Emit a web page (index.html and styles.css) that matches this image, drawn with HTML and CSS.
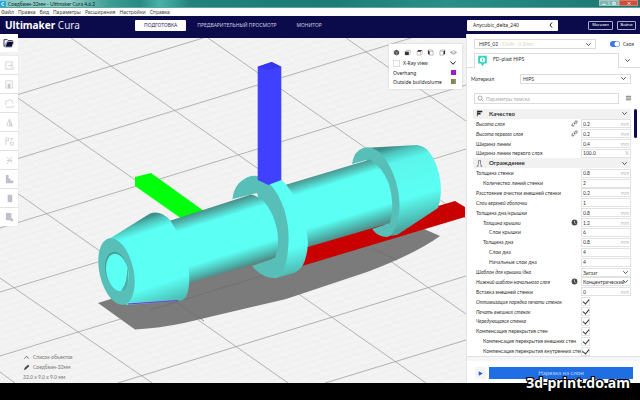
FILE: index.html
```html
<!DOCTYPE html>
<html lang="ru">
<head>
<meta charset="utf-8">
<title>Ultimaker Cura</title>
<link rel="stylesheet" href="styles.css">
</head>
<body>
<svg class="defs" aria-hidden="true">
  <symbol id="chev" viewBox="0 0 8 8"><path d="M1.500 2.500 4 5.300 6.500 2.500" fill="none" stroke="currentColor" stroke-width="1"/></symbol>
  <symbol id="link" viewBox="0 0 8 8"><path d="M3.4 4.6 5 3M3.6 2.8 5 1.4a1.2 1.2 0 0 1 1.700 1.700L5.300 4.500M4.400 5.200 3 6.600A1.200 1.200 0 0 1 1.300 4.900L2.700 3.500" fill="none" stroke="#555" stroke-width="1"/></symbol>
  <symbol id="fx" viewBox="0 0 8 8"><circle cx="4" cy="4" r="3.300" fill="#4a4a4a"/><path d="M4 1.800v2.500l1.400 1" fill="none" stroke="#ddd" stroke-width=".8"/></symbol>
</svg>

<div class="titlebar">
  <svg class="app-icon" viewBox="0 0 8 8"><rect width="8" height="8" rx="1" fill="#25a9dc"/><path d="M5.600 2.500a2 2 0 1 0 0 3" fill="none" stroke="#fff" stroke-width="1.200"/></svg>
  <span class="title-text">Соедбвин-32мм - Ultimaker Cura 4.6.2</span>
  <div class="win-buttons">
    <button aria-label="Свернуть"><svg viewBox="0 0 8 6"><path d="M2 4h4" stroke="#fff"/></svg></button>
    <button aria-label="Развернуть"><svg viewBox="0 0 8 6"><path d="M2.500 1.500h3v2.500h-3z" fill="none" stroke="#fff"/></svg></button>
    <button class="close" aria-label="Закрыть"><svg viewBox="0 0 8 6"><path d="M2.500 1.500l3 3M5.500 1.500l-3 3" stroke="#fff"/></svg></button>
  </div>
</div>

<nav class="menubar">
  <a href="#">Файл</a><a href="#">Правка</a><a href="#">Вид</a><a href="#">Параметры</a><a href="#">Расширения</a><a href="#">Настройки</a><a href="#">Справка</a>
</nav>

<header class="header">
  <div class="brand"><b>Ultimaker</b> Cura</div>
  <div class="stages">
    <button class="stage active">ПОДГОТОВКА</button>
    <button class="stage preview">ПРЕДВАРИТЕЛЬНЫЙ ПРОСМОТР</button>
    <button class="stage">МОНИТОР</button>
  </div>
  <div class="account">
    <button class="printer"><span>Anycubic_delta_240</span><svg viewBox="0 0 8 8"><path d="M5 1.500 3 4l2 2.500" fill="none" stroke="#222"/></svg></button>
    <button class="outline market">Магазин</button>
    <button class="outline">Войти</button>
  </div>
</header>

<main class="workspace">
  <section class="viewport">
    <svg class="scene" viewBox="0 38 466 345" preserveAspectRatio="xMidYMid slice" role="img" aria-label="3D-модель">
      <defs>
        <pattern id="fineA" width="40" height="6.200" patternUnits="userSpaceOnUse" patternTransform="rotate(-17)"><path d="M0 3h40" stroke="#ebebeb" stroke-width=".7"/></pattern>
        <pattern id="fineB" width="40" height="8" patternUnits="userSpaceOnUse" patternTransform="rotate(35)"><path d="M0 4h40" stroke="#efefef" stroke-width=".6"/></pattern>
        <linearGradient id="shaft1" gradientUnits="userSpaceOnUse" x1="206" y1="209" x2="226" y2="273">
          <stop offset="0" stop-color="#4a8f8a"/><stop offset=".08" stop-color="#4fb9b1"/><stop offset=".2" stop-color="#5bfff4"/><stop offset=".74" stop-color="#5bfff4"/><stop offset=".88" stop-color="#4fc4bb"/><stop offset="1" stop-color="#4d8885"/>
        </linearGradient>
        <linearGradient id="shaft2" gradientUnits="userSpaceOnUse" x1="328" y1="171" x2="348" y2="236">
          <stop offset="0" stop-color="#4a8f8a"/><stop offset=".08" stop-color="#4fb9b1"/><stop offset=".2" stop-color="#5bfff4"/><stop offset=".72" stop-color="#5bfff4"/><stop offset=".86" stop-color="#4fc4bb"/><stop offset="1" stop-color="#4d8885"/>
        </linearGradient>
        <linearGradient id="coneL" gradientUnits="userSpaceOnUse" x1="132" y1="222" x2="160" y2="306">
          <stop offset="0" stop-color="#3f8f8a"/><stop offset=".06" stop-color="#4cc4bc"/><stop offset=".16" stop-color="#5bfff4"/><stop offset=".76" stop-color="#5bfff4"/><stop offset="1" stop-color="#4cbcb4"/>
        </linearGradient>
        <linearGradient id="coneR" gradientUnits="userSpaceOnUse" x1="398" y1="145" x2="421" y2="224">
          <stop offset="0" stop-color="#3f8f8a"/><stop offset=".07" stop-color="#4bc4bc"/><stop offset=".2" stop-color="#5bf6eb"/><stop offset=".65" stop-color="#5bfff4"/><stop offset=".85" stop-color="#51cfc6"/><stop offset="1" stop-color="#49a8a2"/>
        </linearGradient>
        <linearGradient id="ring" gradientUnits="userSpaceOnUse" x1="270" y1="180" x2="297" y2="276">
          <stop offset="0" stop-color="#5bfff4"/><stop offset=".72" stop-color="#5bfff4"/><stop offset="1" stop-color="#4dafa8"/>
        </linearGradient>
      </defs>
      <rect x="0" y="38" width="466" height="345" fill="#f3f3f3"/>
      <rect x="0" y="38" width="466" height="345" fill="url(#fineA)"/>
      <rect x="0" y="38" width="466" height="345" fill="url(#fineB)"/>
      <g stroke="#a2a2a2" stroke-width=".8" fill="none">
        <path d="M0 100 203 38M0 164 411 38M0 228 466 85M0 292 466 149M0 356 466 213M118 383 466 276M325 383 466 340"/>
        <path d="M71 38 466 314M0 85.500 426 383M0 181 288 383M0 278 152 383M0 372 15 383M208 38 466 218M346 38 466 121"/>
      </g>
      <path d="M98 303 135 329.500Q160 328 184 323L286 299 367 272Q415 254 440 236L424 229 300 240Z" fill="#7b7b7b"/>
      <g stroke="#6b6b6b" stroke-width=".7"><path d="M176 302 204 321M150 310 330 255M373 249 397 260"/></g>
      <path d="M135 177 151 173 204 211 182 219 135 186Z" fill="#00ff0a"/>
      <path d="M455 201 465 207V217L302 266 306 245Z" fill="#c90000"/>
      <!-- right barb -->
      <path d="M363 148 417 145Q425 146 430 153 438 164 440.500 182 442 196 438 208L397 235 388 236Z" fill="url(#coneR)"/>
      <path d="M352 164Q354 151 363 148 376 145 386 160 395 174 398 190 401 205 398 219 394 236 387 237 378 237 372 229L390 223 370 159Z" fill="#57bfb7"/>
      <path d="M285 185 370 159.500Q383 168 389 184 395 206 390 223L308 247Z" fill="url(#shaft2)"/>
      <!-- centre ring -->
      <path d="M256 176 281 179Q292 190 300 207 307 225 308 244 307 257 303 265 299 271 294 273L276 278Z" fill="url(#ring)"/>
      <path d="M232.500 199Q234 183 248 177 257 173 267 181 279 192 285 212 291 233 287 258 284 276 276 278 263 279 252 266L275 258 257 193Z" fill="#57bfb7"/>
      <path d="M166 222 251 194.500Q265 197 273 216 282 240 275 258L189 283Z" fill="url(#shaft1)"/>
      <path d="M257.700 66.700 271.700 62 281.300 66.700V180L268.300 185 257.700 180Z" fill="#4040ff"/>
      <path d="M257.700 66.700 271.700 62 281.300 66.700 268 70Z" fill="#3636ef"/>
      <!-- left barb -->
      <path d="M109 239 150 213.500Q160 210 170 220 181 236 187 259 192 284 186 297 183 301 178 301L126 305Z" fill="url(#coneL)"/>
      <path d="M128 304 178 300.500" stroke="#7a35d8" stroke-width="1.200"/>
      <ellipse cx="116.500" cy="271.500" rx="17" ry="34" transform="rotate(-13 116.500 271.500)" fill="#57bfb7"/>
      <ellipse cx="117" cy="271.500" rx="11.500" ry="20" transform="rotate(-12 117 271.500)" fill="#489f99"/>
      <ellipse cx="117.500" cy="272.500" rx="11" ry="19" transform="rotate(-12 117.500 272.500)" fill="#5bfff4"/>
      <path d="M127 267Q131 282 125 290L121 291Q128 282 127 267Z" fill="#4dafa8"/>
    </svg>

    <div class="tools">
      <button class="open" aria-label="Открыть"><svg viewBox="0 0 14 12"><path d="M1 10V2h4l1 1h5v2H4.500L2 10z" fill="#fff" stroke="#0b0b40"/><path d="M2 11 5 4h8l-2.500 7z" fill="#0b0b40"/></svg></button>
      <div class="toolbar">
        <button aria-label="Переместить"><svg viewBox="0 0 12 12"><path d="M2 2h7v3M2 2v8h8V7M4 6h5M7 4l2 2-2 2"/></svg></button>
        <button aria-label="Масштаб"><svg viewBox="0 0 12 12"><path d="M2 2h7v8H2z"/><path class="f" d="M4 5h3v5H4z"/></svg></button>
        <button aria-label="Поворот"><svg viewBox="0 0 12 12"><path d="M2 8V3h2l2-1 3 1 1 3M2 10h8V8"/></svg></button>
        <button aria-label="Зеркало"><svg viewBox="0 0 12 12"><path d="M3 9 6 2v8z"/><path class="f" d="M7 2l2 7 1 1H7z"/></svg></button>
        <button aria-label="Настройки модели"><svg viewBox="0 0 12 12"><path d="M2 10V2h3v3H2M7 3h3M8.500 2v3M7 7h3v3H7z"/></svg></button>
        <button aria-label="Блокировка поддержек"><svg viewBox="0 0 12 12"><path d="M3 2l6 7M9 2 3 10M3 6h6"/></svg></button>
        <button class="dim" aria-label="Поддержки"><svg viewBox="0 0 12 12"><path class="f" d="M2 1h3v4h2v2h3v3H2z"/></svg></button>
        <button class="dim" aria-label="Цилиндр"><svg viewBox="0 0 12 12"><path class="f" d="M4 2h5v8H4z"/></svg></button>
        <button class="dim" aria-label="Сетка"><svg viewBox="0 0 12 12"><path class="f" d="M2 1h6v6h2v3H7V9H2z"/></svg></button>
      </div>
    </div>

    <div class="view-panel">
      <div class="cams">
        <svg viewBox="0 0 8 8"><path d="M4 .8 7 2.400v3.400L4 7.300 1 5.800V2.400z" fill="#555"/><path d="M1.500 2.700 4 4l2.500-1.300M4 4v3" stroke="#aaa" stroke-width=".6" fill="none"/></svg>
        <svg viewBox="0 0 8 8"><path d="M1 3h4.500v4H1z" fill="#333"/><path d="M1 3l1.500-1.500H7v4L5.500 7" fill="none" stroke="#999" stroke-width=".7"/></svg>
        <svg viewBox="0 0 8 8"><path d="M1 3l1.500-2H7L5.500 3z" fill="#333"/><path d="M1.300 3v4h4V3M7 1v4L5.500 7" fill="none" stroke="#aaa" stroke-width=".7"/></svg>
        <svg viewBox="0 0 8 8"><path d="M1 1l2 1.500V7L1 5.500z" fill="#333"/><path d="M1 1h4l2 1.500M3 2.500h4V7H3" fill="none" stroke="#999" stroke-width=".7"/></svg>
        <svg viewBox="0 0 8 8"><path d="M5 2.500 7 1v4.500L5 7z" fill="#333"/><path d="M1 2.500h4V7H1zM1 2.500 3 1h4" fill="none" stroke="#999" stroke-width=".7"/></svg>
        <svg viewBox="0 0 8 8"><path d="M.8 3.500 4 2l3.200 1.500L4 5zM.8 3.500v.8L4 6l3.200-1.700v-.8" fill="none" stroke="#888" stroke-width=".7"/></svg>
      </div>
      <button class="view-mode"><i></i><span>X-Ray view</span><svg><use href="#chev"/></svg></button>
      <div class="legend"><span>Overhang</span><i class="over"></i></div>
      <div class="legend"><span>Outside buildvolume</span><i class="outside"></i></div>
    </div>

    <div class="object-info">
      <button><svg viewBox="0 0 8 8"><path d="M1.500 5.300 4 2.500l2.500 2.800" fill="none" stroke="#666"/></svg><span>Список объектов</span></button>
      <button><svg viewBox="0 0 8 8"><path d="M1 7 2 4.300 5.800.8l1.500 1.500-3.800 3.800z" fill="#444"/></svg><span>Соедбвин-32мм</span></button>
      <span>32.0 x 9.0 x 9.0 мм</span>
    </div>
  </section>

  <aside class="sidebar">
    <div class="profile">
      <button class="combo"><span>HIPS_02 <em>- Draft - 0.2mm</em></span><svg><use href="#chev"/></svg></button>
      <label class="switch"><input type="checkbox" checked><span>Своя</span></label>
    </div>
    <div class="extruders">
      <button class="extruder"><svg viewBox="0 0 12 14"><path d="M1 1h10v9H8l-2 3-2-3H1z" fill="#2ed5ba"/><circle cx="6" cy="5.500" r="3" fill="#fff"/><path d="M6 3.500v3.500" stroke="#2ed5ba"/></svg><span>FD-plast HIPS</span></button>
      <button class="more" aria-label="Ещё"><svg><use href="#chev"/></svg></button>
    </div>
    <div class="material">
      <label for="material">Материал</label>
      <div class="pick"><select id="material"><option>HIPS</option></select><svg><use href="#chev"/></svg></div>
    </div>
    <div class="search">
      <label class="search-box"><svg viewBox="0 0 8 8"><circle cx="3.500" cy="3.500" r="2.300" fill="none" stroke="#888" stroke-width=".8"/><path d="M5.200 5.200 7.200 7.200" stroke="#888" stroke-width=".8"/></svg><input type="text" placeholder="Параметры поиска" aria-label="Параметры поиска"></label>
      <button class="menu" aria-label="Меню"><svg viewBox="0 0 8 8"><path d="M1 1.500h6M1 3.500h6M1 5.500h6" stroke="#444" stroke-width=".8"/></svg></button>
    </div>

    <div class="settings">
      <div class="list">
        <button class="group"><svg viewBox="0 0 10 10"><path d="M2 1h7v2.300H2zM2 4h4.500v2.300H2z" fill="#222"/><path d="M2 1v8" stroke="#222"/></svg><span>Качество</span><svg class="chev"><use href="#chev"/></svg></button>
        <div class="row it"><label for="s1">Высота слоя</label><svg><use href="#link"/></svg><div class="field"><input id="s1" type="text" value="0.2"><span>mm</span></div></div>
        <div class="row it"><label for="s2">Высота первого слоя</label><svg><use href="#link"/></svg><div class="field"><input id="s2" type="text" value="0.2"><span>mm</span></div></div>
        <div class="row"><label for="s3">Ширина линии</label><div class="field"><input id="s3" type="text" value="0.4"><span>mm</span></div></div>
        <div class="row"><label for="s4">Ширина линии первого слоя</label><div class="field"><input id="s4" type="text" value="100.0"><span>%</span></div></div>
        <button class="group"><svg viewBox="0 0 10 10"><path d="M3 1h4M3.500 1v5L2 9M6.500 1v5L8 9M1 9h2.500M6.500 9H9" fill="none" stroke="#555" stroke-width=".9"/></svg><span>Ограждение</span><svg class="chev"><use href="#chev"/></svg></button>
        <div class="row"><label for="s5">Толщина стенки</label><div class="field"><input id="s5" type="text" value="0.8"><span>mm</span></div></div>
        <div class="row in1"><label for="s6">Количество линий стенки</label><div class="field"><input id="s6" type="text" value="2"></div></div>
        <div class="row"><label for="s7">Расстояние очистки внешней стенки</label><div class="field"><input id="s7" type="text" value="0.2"><span>mm</span></div></div>
        <div class="row it"><label for="s8">Слои верхней оболочки</label><div class="field"><input id="s8" type="text" value="1"></div></div>
        <div class="row"><label for="s9">Толщина дна/крышки</label><div class="field"><input id="s9" type="text" value="0.8"><span>mm</span></div></div>
        <div class="row it in1"><label for="s10">Толщина крышки</label><svg><use href="#fx"/></svg><div class="field"><input id="s10" type="text" value="1.2"><span>mm</span></div></div>
        <div class="row in2"><label for="s11">Слои крышки</label><div class="field"><input id="s11" type="text" value="6"></div></div>
        <div class="row in1"><label for="s12">Толщина дна</label><div class="field"><input id="s12" type="text" value="0.8"><span>mm</span></div></div>
        <div class="row in2"><label for="s13">Слои дна</label><div class="field"><input id="s13" type="text" value="4"></div></div>
        <div class="row in2"><label for="s14">Начальные слои дна</label><div class="field"><input id="s14" type="text" value="4"></div></div>
        <div class="row it"><label for="s15">Шаблон для крышки/дна</label><div class="field"><select id="s15"><option>Зигзаг</option></select><svg><use href="#chev"/></svg></div></div>
        <div class="row it"><label for="s16">Нижний шаблон начального слоя</label><svg><use href="#fx"/></svg><div class="field"><select id="s16"><option>Концентрический</option></select><svg><use href="#chev"/></svg></div></div>
        <div class="row"><label for="s17">Вставка внешней стенки</label><div class="field"><input id="s17" type="text" value="0"><span>mm</span></div></div>
        <div class="row it"><label for="s18">Оптимизация порядка печати стенок</label><div class="tick"><input id="s18" type="checkbox" checked></div></div>
        <div class="row it"><label for="s19">Печать внешних стенок</label><div class="tick"><input id="s19" type="checkbox" checked></div></div>
        <div class="row it"><label for="s20">Чередующаяся стенка</label><div class="tick"><input id="s20" type="checkbox" checked></div></div>
        <div class="row"><label for="s21">Компенсация перекрытия стен</label><div class="tick"><input id="s21" type="checkbox" checked></div></div>
        <div class="row in1"><label for="s22">Компенсация перекрытия внешних стен</label><div class="tick"><input id="s22" type="checkbox" checked></div></div>
        <div class="row in1"><label for="s23">Компенсация перекрытия внутренних стен</label><div class="tick"><input id="s23" type="checkbox" checked></div></div>
      </div>
      <div class="scroll"><i></i></div>
    </div>

    <div class="action">
      <button class="play" aria-label="Просмотр"><svg viewBox="0 0 8 8"><path d="M2 1.500 6.500 4 2 6.500z" fill="#1b5fd6"/></svg></button>
      <button class="slice">Нарезка на слои</button>
    </div>
  </aside>
</main>

<footer class="footer"><span class="watermark">3d-print.do.am</span></footer>
</body>
</html>
```
FILE: styles.css
```css
* { box-sizing: border-box; }

body {
  margin: 0;
  min-height: 100vh;
  display: flex;
  flex-direction: column;
  background: #000;
  color: #333;
  font: 5px/8px "Noto Sans", "Open Sans", sans-serif;
}

button, input, select {
  margin: 0;
  padding: 0;
  border: 0;
  background: none;
  color: inherit;
  font: inherit;
  text-align: left;
}

button { display: flex; align-items: center; }
select { appearance: none; width: 100%; }
svg { flex: none; width: 8px; height: 8px; display: block; }
.defs { position: absolute; width: 0; height: 0; }

/* window chrome */
.titlebar {
  display: flex;
  align-items: center;
  height: 8px;
  gap: 2px;
  background: linear-gradient(90deg, #8ccbc5 0, #8ccbc5 70px, #3d9c93 110px, #2a8b84 140px, #48b3aa 160px, #23837c 190px, #1d7a75 50%, #2a8f88 70%, #1c7470);
  border-bottom: 1px solid #5aa6a0;
}
.app-icon { width: 6px; height: 6px; }
.title-text { color: #0c2422; font-family: Lato, "Liberation Sans", sans-serif; }
.win-buttons { display: flex; margin-left: auto; padding-right: 2px; align-self: flex-start; }
.win-buttons button { width: 10px; height: 6px; justify-content: center; background: #86b5b1; border: 1px solid #9cc8c4; }
.win-buttons svg { width: 8px; height: 5px; }
.win-buttons .close { width: 19px; background: #c9503f; border-color: #d97c6c; }

.menubar { display: flex; align-items: center; height: 8px; padding-left: 1px; gap: 4px; background: #fcfcfc; }
.menubar a { color: #444; text-decoration: none; }

.header { display: flex; align-items: center; height: 18px; background: #0b0b4b; color: #fff; }
.brand { flex: 0 0 135px; padding-left: 5px; font-size: 10px; line-height: 14px; color: #e6e6f2; }
.brand b { color: #fff; }
.stages { display: flex; flex: 1; }
.stage { height: 11px; padding: 0 9px; color: #cfcfe4; }
.stage.active { background: #fff; color: #222255; border-radius: 1px; }
.stage.preview { margin: 0 2px; }
.account { flex: 0 0 173px; display: flex; align-items: center; }
.printer { width: 91px; height: 11px; padding: 0 3px 0 6px; justify-content: space-between; background: #fff; color: #222; border-radius: 1px; }
.outline { width: 19px; height: 9px; justify-content: center; border: 1px solid #a9a9c8; border-radius: 1px; font-size: 4px; color: #fff; }
.outline.market { width: 25px; margin: 0 4px 0 30px; }

.workspace { flex: 1; display: flex; }

/* 3D view */
.viewport { position: relative; flex: 1; border-top: 4px solid #0b0b4b; background: #f3f3f3; }
.scene { position: absolute; inset: 0; width: 100%; height: 100%; }

.tools { position: absolute; top: -4px; left: 0; width: 18px; }
.tools button { width: 100%; height: 18px; justify-content: center; background: #fff; }
.tools svg { width: 11px; height: 11px; fill: none; stroke: #d2d2d6; stroke-width: 1; }
.tools .open { margin-bottom: 4px; }
.tools .open svg { width: 12px; height: 10px; }
.toolbar { box-shadow: 0 0 1px #ccc; display: grid; gap: 1px; background: #e2e2e6; }
.tools .f { fill: #c6c6ce; stroke: none; }
.tools .dim .f { fill: #c0c0cc; }

.view-panel { position: absolute; top: 6px; right: 4px; width: 73px; padding: 5px 5px 3px 4px; background: #fff; box-shadow: 0 0 2px #ccc; color: #222; }
.cams { display: flex; justify-content: space-between; margin-bottom: 2px; }
.cams svg { width: 7px; height: 7px; }
.view-mode { width: 100%; height: 10px; gap: 3px; }
.view-mode i { width: 7px; height: 7px; border: 1px solid #ddd; }
.view-mode span { flex: 1; }
.legend { display: flex; align-items: center; justify-content: space-between; height: 9px; padding-right: 1px; }
.legend i { width: 5px; height: 5px; }
.over { background: #a31bc4; }
.outside { background: linear-gradient(90deg, #7c8a4a 50%, #9c8c7c 50%); }

.object-info { position: absolute; left: 23px; bottom: 2px; display: grid; gap: 2px; color: #777; font-family: Lato, sans-serif; }
.object-info button { gap: 3px; height: 8px; }
.object-info svg { width: 7px; height: 7px; }

/* settings panel */
.sidebar { flex: 0 0 174px; min-width: 0; display: flex; flex-direction: column; background: #fff; border-left: 1px solid #e4e4ea; color: #333; font-family: Lato, "Liberation Sans", sans-serif; }
.sidebar svg { width: 7px; height: 7px; color: #444; }

.profile { display: flex; align-items: center; padding: 5px 4px 4px 7px; }
.combo { width: 122px; height: 10px; padding: 0 3px 0 4px; justify-content: space-between; border: 1px solid #dcdcdc; }
.combo em { color: #dcd6c4; font-style: normal; }
.switch { display: flex; align-items: center; gap: 3px; margin-left: 14px; }
.switch input { appearance: none; width: 10px; height: 6px; border-radius: 3px; background: radial-gradient(circle at 7px 3px, #fff 0, #fff 2px, #3a7be8 3px); }

.extruders { display: flex; height: 15px; }
.extruders::before { content: ""; width: 7px; border-bottom: 1px solid #dcdcdc; }
.extruder { width: 145px; align-items: flex-start; gap: 5px; padding: 1px 2px; border: 1px solid #dcdcdc; border-bottom: 0; }
.extruder svg { width: 11px; height: 12px; }
.more { flex: 1; justify-content: center; padding-right: 5px; border-bottom: 1px solid #dcdcdc; }

.material { display: flex; align-items: center; padding: 6px 9px 9px 4px; }
.material label { flex: 1; }
.pick { position: relative; width: 111px; height: 10px; border: 1px solid #dcdcdc; }
.pick select { height: 8px; padding-left: 2px; display: block; }
.pick svg, .field svg { position: absolute; right: 3px; top: 0; pointer-events: none; }
.field svg { right: 1px; }

.search { display: flex; align-items: center; gap: 5px; padding: 0 6px 0 7px; }
.search-box { width: 145px; height: 11px; display: flex; align-items: center; gap: 2px; padding: 0 2px; border: 1px solid #dcdcdc; }
.search-box input { flex: 1; min-width: 0; }
.search-box input::placeholder { color: #aaa; opacity: 1; }
.menu { padding: 1px; }

.settings { flex: 1; display: flex; padding: 5px 2px 0 6px; }
.list { flex: none; width: 158px; display: grid; grid-template-columns: minmax(0, 1fr); grid-auto-rows: 1fr; }
.group { width: 100%; padding: 0 3px; background: #f1f1f1; font-weight: bold; font-size: 6px; color: #333; }
.group span { flex: 1; padding-left: 6px; }
.row { display: flex; align-items: center; padding-left: 3px; gap: 3px; min-height: 9px; }
.row label { flex: 1; min-width: 0; white-space: nowrap; }
.it label { font-style: italic; }
.in1 { padding-left: 10px; }
.in2 { padding-left: 16px; }
.field { position: relative; flex: none; width: 50px; height: 9px; display: flex; align-items: center; border: 1px solid #e2e2e2; padding: 0 1px; }
.field input { flex: 1; min-width: 0; height: 7px; }
.field select { height: 7px; }
.field span { color: #bbb; }
.tick { flex: none; width: 50px; }
.tick input { appearance: none; display: block; position: relative; width: 9px; height: 9px; border: 1px solid #e2e2e2; }
.tick input:checked::after { content: ""; position: absolute; left: 2px; top: 0; width: 3px; height: 5px; border: solid #333; border-width: 0 1px 1px 0; transform: rotate(40deg); }
.scroll { padding-left: 3px; }
.scroll i { display: block; width: 3px; height: 29px; border-radius: 2px; background: #0b0b4b; }

.action { display: flex; align-items: center; gap: 3px; border-top: 1px solid #e0e0e6; padding: 10px 7px 4px 8px; box-shadow: inset 0 4px #f6f6f8; }
.play { width: 11px; height: 12px; justify-content: center; background: #f4f4f6; }
.slice { flex: 1; height: 12px; justify-content: center; background: #1f6ee4; color: #b9d4ff; font-size: 6px; line-height: 6px; }

.footer { position: relative; height: 17px; background: #000; }
.watermark {
  position: absolute;
  right: 10px;
  bottom: 11px;
  color: #fff;
  font: bold 14px/12px "Open Sans", "Noto Sans", sans-serif;
  text-shadow: 1px 0 #000, -1px 0 #000, 0 1px #000, 0 -1px #000, 1px 1px #000, -1px -1px #000, 1px -1px #000, -1px 1px #000;
}
```
